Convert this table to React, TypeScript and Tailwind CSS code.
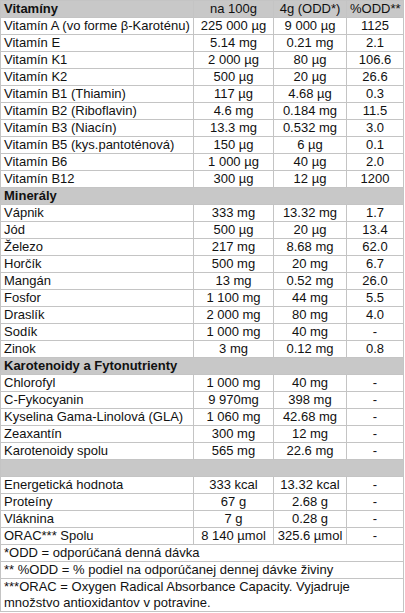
import React from "react"

type Row = [string, string, string, string]

const nb = (s: string) => s.replace(/ (?=\d)/g, "\u00a0").replace(/(\d) /g, "$1\u00a0")

const vitaminy: Row[] = [
  ["Vitamín A (vo forme β-Karoténu)", "225 000 µg", "9 000 µg", "1125"],
  ["Vitamín E", "5.14 mg", "0.21 mg", "2.1"],
  ["Vitamín K1", "2 000 µg", "80 µg", "106.6"],
  ["Vitamín K2", "500 µg", "20 µg", "26.6"],
  ["Vitamín B1 (Thiamin)", "117 µg", "4.68 µg", "0.3"],
  ["Vitamín B2 (Riboflavin)", "4.6 mg", "0.184 mg", "11.5"],
  ["Vitamín B3 (Niacín)", "13.3 mg", "0.532 mg", "3.0"],
  ["Vitamín B5 (kys.pantoténová)", "150 µg", "6 µg", "0.1"],
  ["Vitamín B6", "1 000 µg", "40 µg", "2.0"],
  ["Vitamín B12", "300 µg", "12 µg", "1200"],
]

const mineraly: Row[] = [
  ["Vápnik", "333 mg", "13.32 mg", "1.7"],
  ["Jód", "500 µg", "20 µg", "13.4"],
  ["Železo", "217 mg", "8.68 mg", "62.0"],
  ["Horčík", "500 mg", "20 mg", "6.7"],
  ["Mangán", "13 mg", "0.52 mg", "26.0"],
  ["Fosfor", "1 100 mg", "44 mg", "5.5"],
  ["Draslík", "2 000 mg", "80 mg", "4.0"],
  ["Sodík", "1 000 mg", "40 mg", "-"],
  ["Zinok", "3 mg", "0.12 mg", "0.8"],
]

const karotenoidy: Row[] = [
  ["Chlorofyl", "1 000 mg", "40 mg", "-"],
  ["C-Fykocyanin", "9 970mg", "398 mg", "-"],
  ["Kyselina Gama-Linolová (GLA)", "1 060 mg", "42.68 mg", "-"],
  ["Zeaxantín", "300 mg", "12 mg", "-"],
  ["Karotenoidy spolu", "565 mg", "22.6 mg", "-"],
]

const ostatne: Row[] = [
  ["Energetická hodnota", "333 kcal", "13.32 kcal", "-"],
  ["Proteíny", "67 g", "2.68 g", "-"],
  ["Vláknina", "7 g", "0.28 g", "-"],
  ["ORAC*** Spolu", "8 140 µmol", "325.6 µmol", "-"],
]

const cell = "border border-[#c4c4c4] px-[3px] py-0 h-[17px] leading-[16px] whitespace-nowrap"

function DataRows({ rows }: { rows: Row[] }) {
  return (
    <>
      {rows.map((r) => (
        <tr key={r[0]}>
          <td className={cell}>{r[0]}</td>
          <td className={`${cell} text-center`}>{nb(r[1])}</td>
          <td className={`${cell} text-center`}>{nb(r[2])}</td>
          <td className={`${cell} text-center`}>{r[3]}</td>
        </tr>
      ))}
    </>
  )
}

function SectionRow({ title }: { title: string }) {
  return (
    <tr className="bg-[#c8c8c8]">
      <td colSpan={4} className={`${cell} font-bold`}>
        {title || "\u00a0"}
      </td>
    </tr>
  )
}

export default function App() {
  return (
    <div className="bg-white w-[405px] h-[613px] overflow-hidden">
      <table
        className="border-collapse table-fixed w-[403px] ml-[0px] text-[13px] text-[#111]"
        style={{ fontFamily: '"Liberation Sans", Arial, sans-serif' }}
      >
        <colgroup>
          <col className="w-[193px]" />
          <col className="w-[80px]" />
          <col className="w-[73px]" />
          <col className="w-[57px]" />
        </colgroup>
        <tbody>
          <tr className="bg-[#c8c8c8]">
            <td className={`${cell} font-bold`}>Vitamíny</td>
            <td className={`${cell} text-center`}>na 100g</td>
            <td className={`${cell} text-center`}>4g (ODD*)</td>
            <td className={`${cell} text-center`}>%ODD**</td>
          </tr>
          <DataRows rows={vitaminy} />
          <SectionRow title="Minerály" />
          <DataRows rows={mineraly} />
          <SectionRow title="Karotenoidy a Fytonutrienty" />
          <DataRows rows={karotenoidy} />
          <SectionRow title="" />
          <DataRows rows={ostatne} />
          <tr>
            <td colSpan={4} className={cell}>*ODD = odporúčaná denná dávka</td>
          </tr>
          <tr>
            <td colSpan={4} className={cell}>** %ODD = % podiel na odporúčanej dennej dávke živiny</td>
          </tr>
          <tr>
            <td colSpan={4} className="border border-[#c4c4c4] px-[3px] py-0 leading-[16px]">
              ***ORAC = Oxygen Radical Absorbance Capacity. Vyjadruje
              <br />
              množstvo antioxidantov v potravine.
            </td>
          </tr>
        </tbody>
      </table>
    </div>
  )
}
